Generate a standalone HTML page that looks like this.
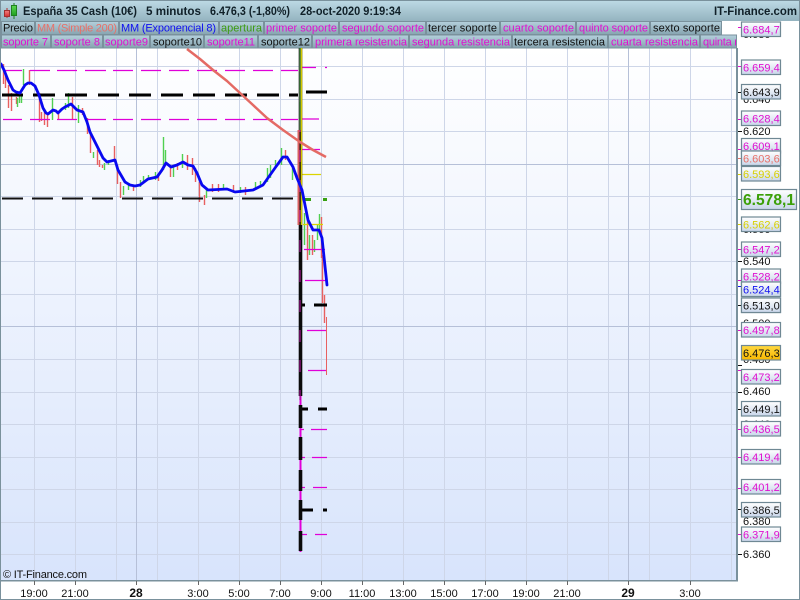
<!DOCTYPE html>
<html><head><meta charset="utf-8"><style>
html,body{margin:0;padding:0;width:800px;height:600px;overflow:hidden;background:#fff}
svg{display:block;position:absolute;left:0;top:0}
text{font-family:"Liberation Sans",sans-serif;font-size:11px;white-space:pre}
.t{fill:#111}.m{fill:#e010d0}
</style></head><body>
<svg width="800" height="600" viewBox="0 0 800 600" xmlns="http://www.w3.org/2000/svg">
<defs>
<linearGradient id="bg" x1="0" y1="0" x2="0" y2="1"><stop offset="0" stop-color="#ffffff"/><stop offset="1" stop-color="#d8e4fc"/></linearGradient>
<linearGradient id="hd" x1="0" y1="0" x2="0" y2="1"><stop offset="0" stop-color="#bcd9e4"/><stop offset="1" stop-color="#94b3bf"/></linearGradient>
<linearGradient id="tb" x1="0" y1="0" x2="0" y2="1"><stop offset="0" stop-color="#b4d0dc"/><stop offset="1" stop-color="#86a4b0"/></linearGradient>
<linearGradient id="bx" x1="0" y1="0" x2="0" y2="1"><stop offset="0" stop-color="#ffffff"/><stop offset="1" stop-color="#c9d6ea"/></linearGradient>
<linearGradient id="or" x1="0" y1="0" x2="0" y2="1"><stop offset="0" stop-color="#ffd840"/><stop offset="1" stop-color="#f8b800"/></linearGradient>
<linearGradient id="gr" x1="0" y1="0" x2="0" y2="1"><stop offset="0" stop-color="#5cd850"/><stop offset="1" stop-color="#20a020"/></linearGradient>
<linearGradient id="rd" x1="0" y1="0" x2="0" y2="1"><stop offset="0" stop-color="#f08080"/><stop offset="1" stop-color="#d83030"/></linearGradient>
</defs>

<!-- frame -->
<rect x="0.5" y="0.5" width="799" height="599" fill="#fff" stroke="#7a919c"/>
<rect x="1" y="1" width="798" height="20" fill="url(#hd)"/>

<!-- logo -->
<path d="M7 8V18" stroke="#b03030"/><path d="M14 3V19" stroke="#208020"/>
<rect x="4.5" y="10.5" width="5" height="6" fill="url(#rd)" stroke="#a03030"/>
<rect x="11.5" y="5.5" width="5" height="10" fill="url(#gr)" stroke="#208020"/>

<!-- title -->
<g font-weight="bold" fill="#102028">
<text x="23" y="15" style="font-size:12px;font-weight:bold" textLength="114" lengthAdjust="spacingAndGlyphs">España 35 Cash (10€)</text>
<text x="146" y="15" style="font-size:12px;font-weight:bold" textLength="55" lengthAdjust="spacingAndGlyphs">5 minutos</text>
<text x="210" y="15" style="font-size:12px;font-weight:bold" textLength="80" lengthAdjust="spacingAndGlyphs">6.476,3 (-1,80%)</text>
<text x="300" y="15" style="font-size:12px;font-weight:bold" textLength="101" lengthAdjust="spacingAndGlyphs">28-oct-2020 9:19:34</text>
<text x="714" y="15" style="font-size:12px;font-weight:bold" textLength="83" lengthAdjust="spacingAndGlyphs">IT-Finance.com</text>
</g>

<!-- chart bg -->
<rect x="1" y="48" width="735" height="532" fill="url(#bg)"/>
<!-- grid -->
<g stroke="#ced6e8" stroke-width="1" fill="none">
<path d="M34.5 48V580M75.5 48V580M116.5 48V580M157.5 48V580M198.5 48V580M239.5 48V580M280.5 48V580M321.5 48V580M362.5 48V580M403.5 48V580M444.5 48V580M485.5 48V580M526.5 48V580M567.5 48V580M608.5 48V580M649.5 48V580M690.5 48V580M731.5 48V580"/>
<path d="M1 66.5H736M1 99.5H736M1 131.5H736M1 196.5H736M1 229.5H736M1 261.5H736M1 294.5H736M1 359.5H736M1 392.5H736M1 424.5H736M1 457.5H736M1 489.5H736M1 522.5H736M1 554.5H736"/>
</g>
<g stroke="#b6c0d8" stroke-width="1" fill="none">
<path d="M136.5 48V580M628.5 48V580M1 164.5H736M1 326.5H736"/>
</g>

<!-- tabs row backgrounds -->
<g fill="url(#tb)" stroke="#7a919c">
<rect x="1.5" y="21.5" width="33" height="13"/><rect x="35.5" y="21.5" width="83" height="13"/><rect x="119.5" y="21.5" width="99" height="13"/><rect x="219.5" y="21.5" width="44" height="13"/><rect x="264.5" y="21.5" width="74" height="13"/><rect x="339.5" y="21.5" width="86" height="13"/><rect x="426.5" y="21.5" width="73" height="13"/><rect x="500.5" y="21.5" width="75" height="13"/><rect x="576.5" y="21.5" width="73" height="13"/><rect x="650.5" y="21.5" width="71" height="13"/>
<rect x="1.5" y="35" width="49" height="13"/><rect x="51.5" y="35" width="51" height="13"/><rect x="103.5" y="35" width="46" height="13"/><rect x="150.5" y="35" width="53" height="13"/><rect x="204.5" y="35" width="53" height="13"/><rect x="258.5" y="35" width="53" height="13"/><rect x="312.5" y="35" width="96" height="13"/><rect x="409.5" y="35" width="102" height="13"/><rect x="512.5" y="35" width="95" height="13"/><rect x="608.5" y="35" width="91" height="13"/><rect x="700.5" y="35" width="36" height="13"/>
</g>
<g>
<text x="3" y="31.5" class="t" textLength="30">Precio</text>
<text x="37" y="31.5" fill="#e87068" textLength="80">MM (Simple 200)</text>
<text x="121" y="31.5" fill="#1010f0" textLength="95">MM (Exponencial 8)</text>
<text x="221" y="31.5" fill="#3c9c10" textLength="41">apertura</text>
<text x="266" y="31.5" class="m" textLength="71">primer soporte</text>
<text x="342" y="31.5" class="m" textLength="82">segundo soporte</text>
<text x="428" y="31.5" class="t" textLength="69">tercer soporte</text>
<text x="503" y="31.5" class="m" textLength="71">cuarto soporte</text>
<text x="579" y="31.5" class="m" textLength="69">quinto soporte</text>
<text x="653" y="31.5" class="t" textLength="67">sexto soporte</text>
<text x="3" y="45.5" class="m" textLength="45">soporte 7</text>
<text x="54" y="45.5" class="m" textLength="46">soporte 8</text>
<text x="105" y="45.5" class="m" textLength="43">soporte9</text>
<text x="153" y="45.5" class="t" textLength="49">soporte10</text>
<text x="207" y="45.5" class="m" textLength="48">soporte11</text>
<text x="261" y="45.5" class="t" textLength="49">soporte12</text>
<text x="315" y="45.5" class="m" textLength="92">primera resistencia</text>
<text x="412" y="45.5" class="m" textLength="98">segunda resistencia</text>
<text x="514" y="45.5" class="t" textLength="91">tercera resistencia</text>
<text x="611" y="45.5" class="m" textLength="87">cuarta resistencia</text>
<svg x="700" y="35" width="36" height="13" viewBox="700 35 36 13"><text x="703" y="45.5" class="m" style="letter-spacing:-.25px">quinta resistencia</text></svg>
</g>

<!-- candles -->
<path fill="none" stroke="#e86060" stroke-width="1.4" d="M3.5 64V84M5.5 70V88M8.5 85V108M11.5 93V111M16.5 97V104M29.5 70V85M39.5 93V122M41.5 112V121M44.5 112V125M47.5 115V127M58.5 113V120M72.5 97V120M82.5 108V115M87.5 118V134M90.5 132V153M97.5 150V165M99.5 160V167M102.5 165V168M114.5 146V162M117.5 165V184M120.5 182V198M133.5 185V191M158.5 175V181M170.5 165V177M177.5 163V170M187.5 155V170M192.5 158V175M195.5 168V182M199.5 182V202M204.5 195V205M212.5 184V192M218.5 184V192M233.5 185V193M245.5 187V195M285.5 150V160M307.5 220V260M312.5 235V255M321.5 217V258M322.5 255V303M324.5 295V323"/>
<path fill="none" stroke="#50d050" stroke-width="1.4" d="M19.5 95V103M21.5 95V103M23.5 69V85M17.5 98V107M52.5 98V120M65.5 103V110M68.5 93V108M78.5 105V123M93.5 152V158M104.5 163V170M108.5 160V165M123.5 186V195M128.5 183V190M140.5 180V187M143.5 176V183M148.5 175V180M155.5 172V180M163.5 137V170M165.5 150V165M173.5 166V177M182.5 154V168M206.5 188V198M223.5 184V190M240.5 187V193M255.5 182V190M260.5 181V186M267.5 168V182M270.5 165V178M275.5 160V168M281.5 148V165M292.5 168V180M304.5 213V245M309.5 235V255M314.5 240V252M317.5 225V240M319.5 214V232"/>
<path d="M326.5 317V375" stroke="#e86060" stroke-width="1" fill="none"/>

<!-- level lines -->
<g fill="none" stroke-width="1.2">
<path d="M3 70.5H22M30 70.5H50M57 70.5H77M85 70.5H106M113 70.5H133M141 70.5H161M169 70.5H189M197 70.5H217M225 70.5H245M253 70.5H273M281 70.5H298" stroke="#e000d8"/>
<path d="M302 67.5H316M325 67.5H327" stroke="#e000d8"/>
<path d="M3 119.5H22M30 119.5H50M57 119.5H77M85 119.5H106M113 119.5H133M141 119.5H161M169 119.5H189M197 119.5H217M225 119.5H245M253 119.5H273M281 119.5H298" stroke="#e000d8"/>
<path d="M301 119H319M301 149.5H320" stroke="#e000d8"/>
<path d="M301 174.5H321M303 224.5H323" stroke="#dcd400"/>
<path d="M304 249.5H325M305 280.5H327M307 330.5H326M308 370.5H326" stroke="#e000d8"/>
<path d="M301 429.5H304M311 429.5H327M302 457.5H305M312 457.5H327M302 487.5H305M313 487.5H327M301 534.5H307M315 534.5H327" stroke="#e000d8"/>
<path d="M2 95H23M33 95H55M65 95H87M98 95H119M129 95H151M161 95H183M193 95H215M225 95H247M257 95H279M289 95H298M306 92H327M301 305H305M314 305H327M301 409H308M318 409H327M301 510H313M323 510H327" stroke="#000" stroke-width="3"/>
<path d="M2 198.5H23M32 198.5H53M62 198.5H83M92 198.5H113M122 198.5H143M152 198.5H173M182 198.5H203M212 198.5H233M242 198.5H263M272 198.5H293" stroke="#111" stroke-width="2"/>
<path d="M303 199.5H311M323 199.5H327" stroke="#36a010" stroke-width="3"/>
</g>

<!-- big vertical -->
<path d="M300.5 390V552" stroke="#e000d8" stroke-width="2" fill="none"/>
<path d="M300.5 48V396M300.5 405V428M300.5 437V460M300.5 470V491M300.5 500V520M300.5 531V551" stroke="#0a0a0a" stroke-width="3.6" fill="none"/>
<path d="M298.5 130V225" stroke="#d86060" stroke-width="2" fill="none"/>
<path d="M300 60V400" stroke="#a01090" stroke-width="1.2" stroke-dasharray="12 18" fill="none"/>
<path d="M300 48V130" stroke="#50a050" stroke-width="1.2" fill="none"/>
<path d="M301.5 48V225" stroke="#d4c800" stroke-width="1.5" fill="none"/>

<!-- MA red -->
<polyline fill="none" stroke="#e46a64" stroke-width="2.5" stroke-linejoin="round" points="187,49 200,59 213,70 227,81 240,93 253,105 267,118 283,130 300,142 313,150 326,157"/>
<!-- MA blue -->
<polyline fill="none" stroke="#0808f0" stroke-width="2.8" stroke-linejoin="round" stroke-linecap="round" points="1,64 4,70 8,80 13,90 16,92 20,93 25,85 28,83 31,83 35,86 39,95 43,108 46,113 48,114 53,110 56,111 58,113 62,109 65,107 71,104 77,110 83,112 87,122 90,132 95,142 103,158 107,162 115,160 118,170 125,182 130,185 135,186 140,185 148,179 157,177 162,170 166,163 171,167 177,165 183,162 188,165 193,166 197,173 202,185 208,190 227,189 235,192 253,190 263,185 275,168 283,157 287,157 293,167 297,178 302,190 308,220 313,230 319,230 322,238 327,285"/>

<text x="3" y="578" fill="#101010" textLength="84" style="font-size:11px">© IT-Finance.com</text>

<!-- axis -->
<rect x="736" y="48" width="2" height="533" fill="#7a919c"/>
<rect x="1" y="580" width="737" height="1.5" fill="#7a919c"/>
<rect x="0" y="1" width="1" height="598" fill="#7a919c"/>
<path d="M34.5 581V585M75.5 581V585M136.5 581V585M198.5 581V585M239.5 581V585M280.5 581V585M321.5 581V585M362.5 581V585M403.5 581V585M444.5 581V585M485.5 581V585M526.5 581V585M567.5 581V585M628.5 581V585M690.5 581V585" stroke="#666" fill="none"/>
<g text-anchor="middle" fill="#111">
<text x="34" y="597">19:00</text><text x="75" y="597">21:00</text><text x="136" y="597" style="font-size:12px;font-weight:bold">28</text><text x="198" y="597">3:00</text><text x="239" y="597">5:00</text><text x="280" y="597">7:00</text><text x="321" y="597">9:00</text><text x="362" y="597">11:00</text><text x="403" y="597">13:00</text><text x="444" y="597">15:00</text><text x="485" y="597">17:00</text><text x="526" y="597">19:00</text><text x="567" y="597">21:00</text><text x="628" y="597" style="font-size:12px;font-weight:bold">29</text><text x="690" y="597">3:00</text>
</g>

<!-- axis ticks -->
<path d="M738 92.5H742M738 131.5H742M738 261.5H742M738 305.5H742M738 365.5H742M738 392.5H742M738 409.5H742M738 509.5H742M738 554.5H742" stroke="#111" fill="none"/>
<path d="M738 27.5H742M738 66.5H742M738 119.5H742M738 149.5H742M738 249.5H742M738 280.5H742M738 330.5H742M738 370.5H742M738 429.5H742M738 457.5H742M738 488.5H742M738 534.5H742" stroke="#e010d0" fill="none"/>
<path d="M738 158.5H742" stroke="#e87068" fill="none"/>
<path d="M738 174.5H742M738 224.5H742" stroke="#d8d000" fill="none"/>
<path d="M738 199.5H742" stroke="#3c9c10" fill="none"/>
<path d="M738 286.5H742" stroke="#1010f0" fill="none"/>

<!-- plain axis labels -->
<g fill="#111">
<text x="743" y="38">6.680</text><text x="743" y="103">6.640</text><text x="743" y="135">6.620</text><text x="743" y="233">6.560</text><text x="743" y="265">6.540</text><text x="743" y="327">6.500</text><text x="743" y="363">6.480</text><text x="743" y="395">6.460</text><text x="743" y="428">6.440</text><text x="743" y="525">6.380</text><text x="743" y="558">6.360</text>
</g>

<!-- boxes -->
<g stroke="#6f8894" stroke-width="1.2" fill="url(#bx)">
<rect x="741.5" y="22" width="39" height="14.5"/>
<rect x="741.5" y="60" width="39" height="14.5"/>
<rect x="741.5" y="84.5" width="39" height="14.5"/>
<rect x="741.5" y="111" width="39" height="14.5"/>
<rect x="741.5" y="138.5" width="39" height="14.5"/>
<rect x="741.5" y="151" width="39" height="14.5"/>
<rect x="741.5" y="166.5" width="39" height="14.5"/>
<rect x="741.5" y="189.5" width="55" height="20"/>
<rect x="741.5" y="217" width="39" height="14.5"/>
<rect x="741.5" y="242" width="39" height="14.5"/>
<rect x="741.5" y="269" width="39" height="14.5"/>
<rect x="741.5" y="282" width="39" height="14.5"/>
<rect x="741.5" y="298" width="39" height="14.5"/>
<rect x="741.5" y="322.5" width="39" height="14.5"/>
<rect x="741.5" y="345.5" width="39" height="14.5" fill="url(#or)"/>
<rect x="741.5" y="369.5" width="39" height="14.5"/>
<rect x="741.5" y="401.5" width="39" height="14.5"/>
<rect x="741.5" y="421.5" width="39" height="14.5"/>
<rect x="741.5" y="449.5" width="39" height="14.5"/>
<rect x="741.5" y="479.5" width="39" height="14.5"/>
<rect x="741.5" y="502.5" width="39" height="14.5"/>
<rect x="741.5" y="527" width="39" height="14.5"/>
</g>
</svg>

<!-- box labels drawn in overlap order -->
<svg width="800" height="600" viewBox="0 0 800 600" xmlns="http://www.w3.org/2000/svg">
<text x="743" y="33.5" class="m">6.684,7</text>
<text x="743" y="71.5" class="m">6.659,4</text>
<text x="743" y="96" class="t">6.643,9</text>
<text x="743" y="122.5" class="m">6.628,4</text>
<text x="743" y="150" class="m">6.609,1</text>
<rect x="741.5" y="151" width="39" height="14.5" fill="url(#bx)" stroke="#6f8894" stroke-width="1.2"/>
<text x="743" y="162.5" fill="#e87068">6.603,6</text>
<text x="743" y="178" fill="#d8d000">6.593,6</text>
<text x="743" y="205" fill="#3ca008" style="font-size:16px;font-weight:bold" textLength="52" lengthAdjust="spacingAndGlyphs">6.578,1</text>
<text x="743" y="228.5" fill="#d8d000">6.562,6</text>
<text x="743" y="253.5" class="m">6.547,2</text>
<text x="743" y="280.5" class="m">6.528,2</text>
<rect x="741.5" y="282" width="39" height="14.5" fill="url(#bx)" stroke="#6f8894" stroke-width="1.2"/>
<text x="743" y="293.5" fill="#1010f0">6.524,4</text>
<rect x="741.5" y="298" width="39" height="14.5" fill="url(#bx)" stroke="#6f8894" stroke-width="1.2"/>
<text x="743" y="309.5" class="t">6.513,0</text>
<text x="743" y="334" class="m">6.497,8</text>
<text x="743" y="357" class="t">6.476,3</text>
<text x="743" y="381" class="m">6.473,2</text>
<text x="743" y="413" class="t">6.449,1</text>
<text x="743" y="433" class="m">6.436,5</text>
<text x="743" y="461" class="m">6.419,4</text>
<text x="743" y="491" class="m">6.401,2</text>
<text x="743" y="514" class="t">6.386,5</text>
<text x="743" y="538.5" class="m">6.371,9</text>
</svg>
</body></html>
